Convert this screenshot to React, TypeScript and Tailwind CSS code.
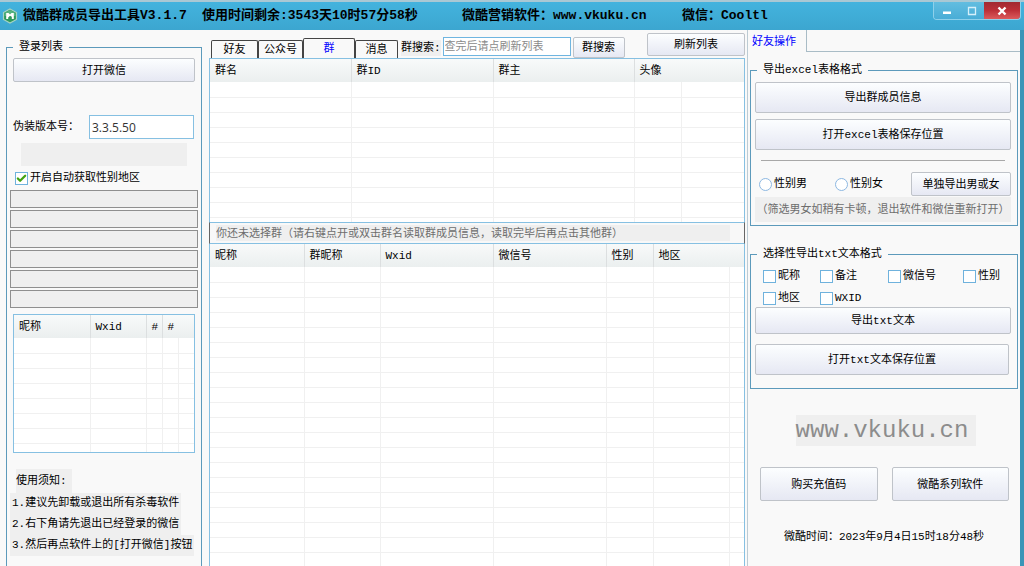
import { useState } from "react";
import type { ReactNode } from "react";
import clsx from "clsx";
import { Check } from "lucide-react";

interface Column {
  label?: string;
  width?: string;
  // columns without a header divider only show their line in the rows
  divider?: boolean;
}

const accountColumns: Column[] = [
  { label: "昵称", width: "w-[76px]", divider: true },
  { label: "Wxid", width: "w-[56px]", divider: true },
  { label: "#", width: "w-4", divider: true },
  { label: "#", width: "w-4" },
  {},
];

const groupColumns: Column[] = [
  { label: "群名", width: "w-[141px]", divider: true },
  { label: "群ID", width: "w-[142px]", divider: true },
  { label: "群主", width: "w-[141px]", divider: true },
  { label: "头像", width: "w-[47px]" },
  {},
];

const memberColumns: Column[] = [
  { label: "昵称", width: "w-[94px]", divider: true },
  { label: "群昵称", width: "w-[76px]", divider: true },
  { label: "Wxid", width: "w-[113px]", divider: true },
  { label: "微信号", width: "w-[113px]", divider: true },
  { label: "性别", width: "w-[47px]", divider: true },
  { label: "地区", width: "w-[76px]" },
  {},
];

const tabs = [
  { name: "好友", width: "w-[47px]" },
  { name: "公众号", width: "w-[45px]" },
  { name: "群", width: "w-[52px]" },
  { name: "消息", width: "w-[43px]" },
];

const notes = [
  "1.建议先卸载或退出所有杀毒软件",
  "2.右下角请先退出已经登录的微信",
  "3.然后再点软件上的[打开微信]按钮",
];

function ListView({
  columns,
  rows,
  className,
}: {
  columns: Column[];
  rows: number;
  className?: string;
}) {
  return (
    <div
      className={clsx(
        "overflow-hidden border border-[#86c0e2] bg-white",
        className
      )}
    >
      <table className="w-full table-fixed border-collapse">
        <thead>
          <tr className="h-[23px] bg-linear-to-b from-[#f8fafa] to-[#ebefef]">
            {columns.map((col, i) => (
              <th
                key={i}
                className={clsx(
                  "p-0 pt-px pl-[5px] text-left font-normal whitespace-nowrap",
                  col.width,
                  col.divider && "border-r border-[#dcdfe0]"
                )}
              >
                {col.label}
              </th>
            ))}
          </tr>
        </thead>
        <tbody>
          {Array.from({ length: rows }, (_, r) => (
            <tr key={r} className="h-[15px]">
              {columns.map((_, c) => (
                <td
                  key={c}
                  className="border-r border-b border-[#f0f0f0] p-0 last:border-r-0"
                />
              ))}
            </tr>
          ))}
        </tbody>
      </table>
    </div>
  );
}

function Button({
  children,
  className,
}: {
  children: ReactNode;
  className?: string;
}) {
  return (
    <button
      type="button"
      className={clsx(
        "rounded-xs border border-[#bfc3c9] bg-linear-to-b from-[#fcfeff] to-[#e6e8f3] pt-px text-center whitespace-nowrap",
        className
      )}
    >
      {children}
    </button>
  );
}

function Checkbox({
  label,
  defaultChecked = false,
}: {
  label: string;
  defaultChecked?: boolean;
}) {
  const [checked, setChecked] = useState(defaultChecked);

  return (
    <label className="flex items-center gap-0.5 whitespace-nowrap">
      <span className="relative size-[13px]">
        <input
          type="checkbox"
          checked={checked}
          onChange={(e) => setChecked(e.target.checked)}
          className="block size-[13px] appearance-none border border-[#6fb2dd] bg-white"
        />
        {checked && (
          <Check
            className="pointer-events-none absolute inset-px size-[11px] text-[#43a312]"
            strokeWidth={5}
          />
        )}
      </span>
      {label}
    </label>
  );
}

function Radio({ label }: { label: string }) {
  return (
    <label className="flex items-center gap-0.5 whitespace-nowrap">
      <input
        type="radio"
        name="gender"
        className="size-[13px] appearance-none rounded-full border border-[#8db8e2] bg-white checked:border-4"
      />
      {label}
    </label>
  );
}

function Logo() {
  return (
    <svg viewBox="0 0 16 16" className="size-4 shrink-0">
      <path
        d="M8 1 L14.5 4.5 V11.5 L8 15 L1.5 11.5 V4.5 Z"
        fill="#2f9a5c"
        stroke="#a5d3c4"
        strokeWidth="1.2"
      />
      <path d="M8 2 L13.5 5 V8 H2.5 V5 Z" fill="#55b380" />
      <path
        d="M4.2 5 H6.5 L8 6.5 L9.5 5 H11.800 V11 H9.800 V8.800 L8 7.800 L6.200 9.500 V11 H4.200 Z"
        fill="#fff"
      />
    </svg>
  );
}

function TitleBar() {
  return (
    <header className="flex h-[30px] shrink-0 items-start border-t-2 border-[#a9c8d4] bg-linear-to-b from-[#43b3de] to-[#3ca6d0]">
      <div className="flex h-7 flex-1 items-center overflow-hidden pl-0.5 text-[13px] font-bold whitespace-nowrap">
        <Logo />
        <h1 className="ml-[5px] w-[179px]">微酷群成员导出工具V3.1.7</h1>
        <span className="w-[260px]">使用时间剩余:3543天10时57分58秒</span>
        <span className="w-[220px]">微酷营销软件：www.vkuku.cn</span>
        <span>微信：Cooltl</span>
      </div>
      <div className="mr-[3px] flex h-[18px] overflow-hidden rounded-b border border-t-0 border-[#8ed0ea]">
        <button
          type="button"
          aria-label="最小化"
          className="flex w-[25px] items-center justify-center bg-linear-to-b from-[#62bde0] to-[#49add6]"
        >
          <svg viewBox="0 0 10 10" className="size-[10px]">
            <path d="M1 5.500h8v2.500H1z" fill="#fff" />
          </svg>
        </button>
        <button
          type="button"
          aria-label="最大化"
          className="flex w-[25px] items-center justify-center bg-linear-to-b from-[#62bde0] to-[#49add6]"
        >
          <svg viewBox="0 0 10 10" className="size-[10px]">
            <path
              d="M1.500 1.500h7v7h-7z"
              fill="none"
              stroke="#d6f0fa"
              strokeWidth="1.300"
            />
          </svg>
        </button>
        <button
          type="button"
          aria-label="关闭"
          className="flex w-9 items-center justify-center bg-linear-to-b from-[#a02a32] via-[#bd3038] to-[#dc5a5c]"
        >
          <svg viewBox="0 0 10 10" className="size-[10px]">
            <path d="m1.500 1.500 7 7m0-7-7 7" stroke="#fff" strokeWidth="2.400" />
          </svg>
        </button>
      </div>
    </header>
  );
}

function LoginPanel() {
  return (
    <aside className="flex w-[209px] shrink-0 flex-col pt-[9px] pr-[7px] pl-1.5">
      <fieldset className="flex-1 border border-b-0 border-[#5c9abb] px-[3px]">
        <legend className="ml-[3px] px-1.5">登录列表</legend>
        <div className="px-[3px]">
          <Button className="mt-[3px] h-6 w-full">打开微信</Button>
          <div className="mt-[33px] flex items-center justify-between pr-px">
            <label htmlFor="version">伪装版本号：</label>
            <input
              id="version"
              defaultValue="3.3.5.50"
              className="h-6 w-[105px] border border-[#86c0e2] bg-white px-0.5 font-['Open_Sans',sans-serif] text-xs text-[#333] outline-none"
            />
          </div>
          <div className="mx-2 mt-1 mb-1 h-[23px] bg-[#efefef]" />
          <div className="flex h-4 items-center pl-0.5">
            <Checkbox label="开启自动获取性别地区" defaultChecked />
          </div>
        </div>
        <div className="mt-1 flex flex-col gap-0.5">
          {Array.from({ length: 6 }, (_, i) => (
            <div key={i} className="h-[18px] border border-[#8f8f8f] bg-[#efefef]" />
          ))}
        </div>
        <ListView
          columns={accountColumns}
          rows={8}
          className="mx-[3px] mt-1.5 h-[139px]"
        />
        <section className="mt-4 whitespace-nowrap">
          <h2 className="ml-1.5 h-6 w-14 bg-[#efefef] leading-6">使用须知:</h2>
          <ul>
            {notes.map((note) => (
              <li key={note} className="h-[21px] leading-[21px]">
                <span className="inline-block bg-[#efefef] px-0.5">{note}</span>
              </li>
            ))}
          </ul>
        </section>
      </fieldset>
    </aside>
  );
}

function GroupPanel() {
  const [active, setActive] = useState("群");

  return (
    <main className="flex min-w-0 flex-1 flex-col">
      <div className="flex h-7 shrink-0 items-end">
        <div role="tablist" className="ml-0.5 flex items-end">
          {tabs.map((tab) => (
            <button
              key={tab.name}
              type="button"
              role="tab"
              aria-selected={active === tab.name}
              onClick={() => setActive(tab.name)}
              className={clsx(
                "rounded-t-xs border border-b-0 border-[#444]",
                tab.width,
                active === tab.name ? "h-5 text-[#0000ff]" : "h-[18px]"
              )}
            >
              {tab.name}
            </button>
          ))}
        </div>
        <label htmlFor="search" className="mb-0.5 ml-[3px] bg-[#efefef]">
          群搜索:
        </label>
        <input
          id="search"
          placeholder="查完后请点刷新列表"
          className="mb-0.5 ml-0.5 h-[19px] w-32 border border-[#6fb5e0] bg-white px-px outline-none placeholder:text-[#8a8a8a]"
        />
        <Button className="ml-0.5 h-[21px] w-[52px]">群搜索</Button>
        <Button className="mb-0.5 ml-auto h-[23px] w-[98px]">刷新列表</Button>
      </div>
      <ListView
        columns={groupColumns}
        rows={12}
        className="h-[164px] shrink-0 border-b-0"
      />
      <div className="flex h-[22px] shrink-0 border border-x-[#666] border-y-[#86c0e2] bg-[#f8f8f8] py-0.5 pr-3.5 pl-1.5">
        <p className="flex-1 truncate bg-[#efefef] leading-[18px] text-[#6d6d6d]">
          你还未选择群（请右键点开或双击群名读取群成员信息，读取完毕后再点击其他群）
        </p>
      </div>
      <ListView
        columns={memberColumns}
        rows={60}
        className="min-h-0 flex-1 border-y-0"
      />
    </main>
  );
}

function ExportPanel() {
  return (
    <aside className="ml-0.5 flex w-[277px] shrink-0 flex-col border-r-4 border-l border-r-[#3a95b7] border-l-[#bccbd4]">
      <div className="flex h-[22px] shrink-0">
        <h2 className="w-[59px] border-r border-[#a9bcc6] pl-1 leading-6 text-[#0000ff]">
          好友操作
        </h2>
        <div className="flex-1 border-b border-[#a9bcc6]" />
      </div>

      <fieldset className="mx-0.5 mt-2.5 h-[164px] border border-[#5c9abb] px-1">
        <legend className="ml-0.5 px-1.5">导出excel表格格式</legend>
        <div className="flex flex-col pt-1 pr-0.5">
          <Button className="h-[31px]">导出群成员信息</Button>
          <Button className="mt-1.5 h-[31px]">打开excel表格保存位置</Button>
          <hr className="mx-1.5 mt-[10px] mb-[11px] border-[#a8a8a8]" />
          <div className="flex h-6 items-center pl-1">
            <div className="w-[76px]">
              <Radio label="性别男" />
            </div>
            <Radio label="性别女" />
            <Button className="ml-auto h-6 w-[100px]">单独导出男或女</Button>
          </div>
          <p className="mt-px h-[25px] bg-[#efefef] text-center leading-[26px] whitespace-nowrap text-[#6d6d6d]">
            （筛选男女如稍有卡顿，退出软件和微信重新打开）
          </p>
        </div>
      </fieldset>

      <fieldset className="mx-0.5 mt-5 h-[143px] border border-[#5c9abb] px-1">
        <legend className="ml-0.5 px-1.5">选择性导出txt文本格式</legend>
        <div className="grid grid-cols-[57px_68px_75px_auto] gap-y-1.5 pt-1.5 pl-2">
          <Checkbox label="昵称" />
          <Checkbox label="备注" />
          <Checkbox label="微信号" />
          <Checkbox label="性别" />
          <Checkbox label="地区" />
          <Checkbox label="WXID" />
        </div>
        <div className="flex flex-col pr-0.5">
          <Button className="mt-px h-[27px]">导出txt文本</Button>
          <Button className="mt-2.5 mr-0.5 h-[31px]">打开txt文本保存位置</Button>
        </div>
      </fieldset>

      <div className="mt-[26px] flex flex-col items-center">
        <a
          href="#"
          className="ml-1 h-[31px] bg-[#efefef] pr-2 text-2xl leading-8 text-[#8c8c8c]"
        >
          www.vkuku.cn
        </a>
        <div className="mt-[21px] flex w-full gap-3.5 pr-[11px] pl-3">
          <Button className="h-[34px] flex-1">购买充值码</Button>
          <Button className="h-[34px] flex-1">微酷系列软件</Button>
        </div>
        <p className="mt-7">微酷时间：2023年9月4日15时18分48秒</p>
      </div>
    </aside>
  );
}

export default function App() {
  return (
    <div className="flex h-screen flex-col overflow-hidden bg-[#f9f9f9] font-[family-name:'Liberation_Mono','Noto_Sans_CJK_SC',monospace] text-[11px] leading-4 text-black">
      <TitleBar />
      <div className="flex min-h-0 flex-1">
        <LoginPanel />
        <GroupPanel />
        <ExportPanel />
      </div>
    </div>
  );
}
